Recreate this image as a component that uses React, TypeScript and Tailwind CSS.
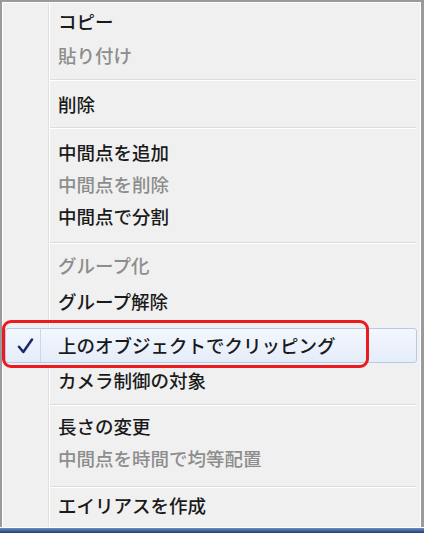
import React from "react";

type Row =
  | { kind: "item"; label: string; h: number; disabled?: boolean; checked?: boolean }
  | { kind: "sep"; h: number };

const rows: Row[] = [
  { kind: "item", label: "コピー", h: 37 },
  { kind: "item", label: "貼り付け", h: 30, disabled: true },
  { kind: "sep", h: 20 },
  { kind: "item", label: "削除", h: 29 },
  { kind: "sep", h: 18 },
  { kind: "item", label: "中間点を追加", h: 31 },
  { kind: "item", label: "中間点を削除", h: 33, disabled: true },
  { kind: "item", label: "中間点で分割", h: 31 },
  { kind: "sep", h: 22 },
  { kind: "item", label: "グループ化", h: 22, disabled: true },
  { kind: "item", label: "グループ解除", h: 51 },
  { kind: "item", label: "上のオブジェクトでクリッピング", h: 37, checked: true },
  { kind: "item", label: "カメラ制御の対象", h: 33 },
  { kind: "sep", h: 16 },
  { kind: "item", label: "長さの変更", h: 26 },
  { kind: "item", label: "中間点を時間で均等配置", h: 38, disabled: true },
  { kind: "sep", h: 20 },
  { kind: "item", label: "エイリアスを作成", h: 16 },
];

function Gutter() {
  return (
    <>
      <div className="w-[45px] shrink-0" />
      <div className="w-px shrink-0 bg-[#e0e0e0]" />
      <div className="w-px shrink-0 bg-white" />
    </>
  );
}

function CheckedItem({ label, h }: { label: string; h: number }) {
  return (
    <div className="relative flex" style={{ height: h }}>
      {/* highlighted row, win7 style */}
      <div className="flex-1 flex ml-[2px] mr-[3px] my-[1px] rounded-[3px] border border-[#b4cbea] bg-gradient-to-b from-[#f3f7fd] to-[#e4edfa]">
        <div className="w-[35px] shrink-0 flex items-center justify-center border-r border-[#c7d8ef]">
          <svg width="17" height="16" viewBox="0 0 17 16" className="ml-[4px]">
            <path d="M2 8.8 L6.3 14 L15 1.5" fill="none" stroke="#1c2a6b" strokeWidth="2.5" strokeLinejoin="round" strokeLinecap="round" />
          </svg>
        </div>
        <div className="flex items-center pl-[17px] text-[18.5px] leading-none text-[#1a1a1a] font-medium whitespace-nowrap">
          {label}
        </div>
      </div>
    </div>
  );
}

export default function App() {
  return (
    <div className="w-[424px] h-[533px] flex flex-col bg-[#f0f0f0] font-['Noto_Sans_CJK_JP','Noto_Sans',sans-serif]">
      <div className="relative h-[527px] border-l-2 border-t-2 border-r-[3px] border-[#9a9a9a]">
        <div className="h-full border-l border-t border-r border-white flex flex-col">
          {rows.map((r, i) => {
            if (r.kind === "sep") {
              return (
                <div key={i} className="flex" style={{ height: r.h }}>
                  <Gutter />
                  <div className="flex-1 flex flex-col justify-center pr-[4px]">
                    <div className="h-px bg-[#dcdcdc]" />
                    <div className="h-px bg-white" />
                  </div>
                </div>
              );
            }
            if (r.checked) return <CheckedItem key={i} label={r.label} h={r.h} />;
            return (
              <div key={i} className="flex" style={{ height: r.h }}>
                <Gutter />
                <div
                  className={
                    "flex-1 flex items-center pl-[8px] text-[18.5px] leading-none font-medium whitespace-nowrap " +
                    (r.disabled ? "text-[#8d8d8d]" : "text-[#1a1a1a]")
                  }
                >
                  {r.label}
                </div>
              </div>
            );
          })}
          <div className="flex-1 flex">
            <Gutter />
          </div>
        </div>

        {/* red annotation frame */}
        <div className="absolute left-[0px] top-[318px] w-[367px] h-[48px] rounded-[9px] border-[3px] border-[#ea1a1f]" />
      </div>
      <div className="h-px bg-white" />
      <div className="flex-1 bg-gradient-to-b from-[#6d8fc2] to-[#203f74]" />
    </div>
  );
}
